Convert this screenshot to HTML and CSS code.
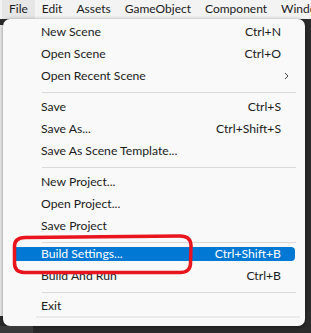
FILE: index.html
```html
<!DOCTYPE html>
<html lang="en">
<head>
    <meta charset="UTF-8">
    <meta name="viewport" content="width=device-width, initial-scale=1.0">
    <title>File menu</title>
    <link rel="stylesheet" href="styles.css">
</head>
<body>
    <!-- menu bar -->
    <div class="menubar">
        <span class="bar-item open">File</span>
        <span class="bar-item">Edit</span>
        <span class="bar-item">Assets</span>
        <span class="bar-item">GameObject</span>
        <span class="bar-item">Component</span>
        <span class="bar-item">Window</span>
    </div>

    <div class="desk">
        <div class="desk-row">
            <div class="side"></div>

            <!-- File dropdown -->
            <div class="menu">
                <div class="item"><span>New Scene</span><span class="key">Ctrl+N</span></div>
                <div class="item"><span>Open Scene</span><span class="key">Ctrl+O</span></div>
                <div class="item"><span>Open Recent Scene</span>
                    <svg class="chev" width="5" height="8" viewBox="0 0 5 8"><polyline points="1,1 4,4 1,7" fill="none" stroke="#444" stroke-width="1"/></svg>
                </div>
                <div class="sep"></div>
                <div class="item"><span>Save</span><span class="key">Ctrl+S</span></div>
                <div class="item"><span>Save As...</span><span class="key">Ctrl+Shift+S</span></div>
                <div class="item"><span>Save As Scene Template...</span></div>
                <div class="sep"></div>
                <div class="item"><span>New Project...</span></div>
                <div class="item"><span>Open Project...</span></div>
                <div class="item"><span>Save Project</span></div>
                <div class="sep"></div>
                <div class="item active"><span>Build Settings...</span><span class="key">Ctrl+Shift+B</span></div>
                <div class="item"><span>Build And Run</span><span class="key">Ctrl+B</span></div>
                <div class="sep"></div>
                <div class="item last"><span>Exit</span></div>
                <div class="menu-foot"></div>
            </div>
        </div>
        <div class="dock">
            <div class="dock-tab"></div>
        </div>
    </div>

    <!-- red hand-drawn mark over Build Settings -->
    <svg class="mark" width="311" height="333" viewBox="0 0 311 333">
        <path d="M25 237.5 L180 236 Q190.5 236 191 245 L190.5 264 Q190 272.5 180 272.5 L24 272.5 Q14.5 272 14.5 263 L14.5 246 Q14.5 238 25 237.5 Z"
              fill="none" stroke="#e8151f" stroke-width="3.5"/>
    </svg>
</body>
</html>
```

FILE: styles.css
```css
body { margin: 0; position: relative; width: 311px; height: 333px; overflow: hidden; background: #2b2b2b; font-family: Lato, "Liberation Sans", sans-serif; font-size: 12.2px; color: #1b1b1b; }

.menubar { display: flex; height: 19px; padding-left: 2px; background: #f3f3f3; font-size: 12px; white-space: nowrap; overflow: hidden; }
.bar-item { height: 17px; line-height: 17px; padding: 0 7px 2px; }
.bar-item.open { background: #e6e6e6; }

.desk { height: 314px; display: flex; flex-direction: column; }
.desk-row { display: flex; flex: 1; }
.side { width: 3px; margin: 6px 0 10px; background: #ededed; }

.menu { width: 302px; height: 307px; box-sizing: border-box; padding-top: 2px; background: #f9f9f9; border-radius: 7px; box-shadow: 0 1px 4px rgba(0, 0, 0, 0.45); }
.item { display: flex; justify-content: space-between; align-items: center; height: 22px; line-height: 22px; margin: 0 10px; padding: 0 14px 0 28px; border-radius: 4px; white-space: nowrap; }
.item.active { height: 14px; line-height: 14px; margin: 4px 10px; background: #0078d4; color: #fff; }
.item.last { height: 20px; line-height: 20px; }
.chev { margin-right: -8px; }
.sep { height: 1px; margin: 5px 9px 3px 39px; background: #d9d9d9; }
.menu-foot { height: 2px; margin: 0 5px 0 33px; background: #ebebeb; }

.dock { height: 7px; display: flex; }
.dock-tab { width: 33px; background: #3a3a3a; }

.mark { position: absolute; left: 0; top: 0; pointer-events: none; }
```
